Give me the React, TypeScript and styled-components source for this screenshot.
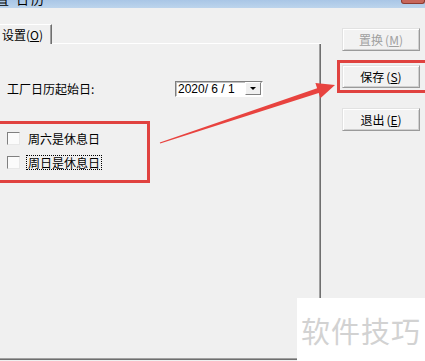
import styled, { createGlobalStyle } from 'styled-components';

const GlobalStyle = createGlobalStyle`
  html, body {
    margin: 0;
    padding: 0;
    background: #f0f0f0;
  }
`;

const Window = styled.div`
  position: relative;
  display: flex;
  flex-direction: column;
  width: 425px;
  height: 361px;
  overflow: hidden;
  background: #f0f0f0;
  font-family: 'Noto Sans CJK SC', 'DejaVu Sans', sans-serif;
  font-size: 12px;
  color: #000;
`;

const TitleBar = styled.div`
  position: relative;
  flex: 0 0 8px;
  display: flex;
  align-items: flex-end;
  justify-content: space-between;
  overflow: hidden;
  background: linear-gradient(#a9c6e6, #bcd4ec);
`;

const TitleText = styled.span`
  margin-left: -4px;
  margin-bottom: 3px;
  font-size: 13px;
  line-height: 13px;
  letter-spacing: 2px;
`;

const CloseButton = styled.div`
  align-self: flex-start;
  width: 22px;
  height: 4px;
  margin-top: -1px;
  background: #c7665a;
  border: 1px solid #8d3b31;
  border-top: none;
  border-radius: 0 0 3px 3px;
`;

const Body = styled.div`
  flex: 1;
  display: flex;
`;

const LeftArea = styled.div`
  display: flex;
  flex-direction: column;
  width: 331px;
  margin-left: -10px;
  padding-top: 16px;
`;

const TabStrip = styled.div`
  display: flex;
  height: 20px;
`;

const Tab = styled.div`
  display: flex;
  align-items: center;
  padding: 0 8px 0 12px;
  border-top: 1px solid #ffffff;
  border-right: 1px solid #6f6f6f;
  box-shadow: inset -1px 0 0 #a0a0a0;
  line-height: 1;
`;

const TabRest = styled.div`
  flex: 1;
  border-bottom: 1px solid #ffffff;
`;

const Panel = styled.div`
  flex: 1;
  display: flex;
  flex-direction: column;
  padding: 36px 0 0 17px;
  border-right: 1px solid #6f6f6f;
  border-bottom: 1px solid #6f6f6f;
  box-shadow: inset -1px -1px 0 #a0a0a0;
  margin-bottom: 1px;
`;

const FieldRow = styled.div`
  display: flex;
  align-items: center;
  height: 17px;
`;

const FieldLabel = styled.span`
  width: 168px;
  line-height: 1;
`;

const DateBox = styled.div`
  display: flex;
  align-items: center;
  justify-content: space-between;
  width: 83px;
  height: 14px;
  padding: 0 1px 0 2px;
  background: #ffffff;
  border: 1px solid;
  border-color: #7f7f7f #ffffff #ffffff #7f7f7f;
  box-shadow: inset 1px 1px 0 #c0c0c0;
  font-family: 'Liberation Sans', 'Noto Sans CJK SC', sans-serif;
  font-size: 12px;
  line-height: 1;
`;

const DropButton = styled.div`
  display: flex;
  align-items: center;
  justify-content: center;
  width: 14px;
  height: 11px;
  background: #f0f0f0;
  border: 1px solid;
  border-color: #ffffff #808080 #808080 #ffffff;
`;

const DownTriangle = styled.div`
  width: 0;
  height: 0;
  border-left: 3px solid transparent;
  border-right: 3px solid transparent;
  border-top: 3px solid #000;
`;

const CheckList = styled.div`
  display: flex;
  flex-direction: column;
  gap: 12px;
  margin-top: 35px;
`;

const CheckRow = styled.div`
  display: flex;
  align-items: center;
  gap: 7px;
  height: 12px;
`;

const CheckBox = styled.div`
  width: 11px;
  height: 11px;
  background: #fbfbfb;
  border: 1px solid;
  border-color: #808080 #e8e8e8 #e8e8e8 #808080;
`;

const CheckLabel = styled.span<{ $focused?: boolean }>`
  padding: 0 1px;
  line-height: 13px;
  outline: ${({ $focused }) => ($focused ? '1px dotted #000' : 'none')};
`;

const ButtonColumn = styled.div`
  display: flex;
  flex-direction: column;
  padding: 20px 0 0 21px;
`;

const WinButton = styled.div<{ $disabled?: boolean; $gap?: number }>`
  display: flex;
  align-items: center;
  justify-content: center;
  gap: 2px;
  width: 76px;
  height: 21px;
  margin-top: ${({ $gap }) => $gap ?? 0}px;
  background: #f2f2f2;
  border: 1px solid;
  border-color: #e2e2e2 #9a9a9a #9a9a9a #e2e2e2;
  box-shadow: inset 1px 1px 0 #ffffff, inset -1px -1px 0 #d0d0d0;
  color: ${({ $disabled }) => ($disabled ? '#a0a0a0' : '#000')};
  line-height: 1;
`;

const Highlight = styled.div<{ $left: number; $top: number; $width: number; $height: number }>`
  position: absolute;
  left: ${({ $left }) => $left}px;
  top: ${({ $top }) => $top}px;
  width: ${({ $width }) => $width}px;
  height: ${({ $height }) => $height}px;
  box-sizing: border-box;
  border: 3px solid #e0423f;
  pointer-events: none;
`;

const ArrowLayer = styled.svg`
  position: absolute;
  left: 0;
  top: 0;
  pointer-events: none;
`;

const Watermark = styled.div`
  position: absolute;
  left: 297px;
  top: 298px;
  width: 128px;
  height: 63px;
  display: flex;
  align-items: center;
  padding-left: 4px;
  box-sizing: border-box;
  background: #ffffff;
  color: #d2d2d2;
  font-size: 29px;
  letter-spacing: 1px;
`;

export default function App() {
  return (
    <>
      <GlobalStyle />
      <Window>
        <TitleBar>
          <TitleText>置 日历</TitleText>
          <CloseButton />
        </TitleBar>
        <Body>
          <LeftArea>
            <TabStrip>
              <Tab>
                设置(<u>O</u>)
              </Tab>
              <TabRest />
            </TabStrip>
            <Panel>
              <FieldRow>
                <FieldLabel>工厂日历起始日:</FieldLabel>
                <DateBox>
                  <span>2020/ 6 / 1</span>
                  <DropButton>
                    <DownTriangle />
                  </DropButton>
                </DateBox>
              </FieldRow>
              <CheckList>
                <CheckRow>
                  <CheckBox />
                  <CheckLabel>周六是休息日</CheckLabel>
                </CheckRow>
                <CheckRow>
                  <CheckBox />
                  <CheckLabel $focused>周日是休息日</CheckLabel>
                </CheckRow>
              </CheckList>
            </Panel>
          </LeftArea>
          <ButtonColumn>
            <WinButton $disabled>
              <span>置换</span>
              <span>
                (<u>M</u>)
              </span>
            </WinButton>
            <WinButton $gap={14}>
              <span>保存</span>
              <span>
                (<u>S</u>)
              </span>
            </WinButton>
            <WinButton $gap={20}>
              <span>退出</span>
              <span>
                (<u>E</u>)
              </span>
            </WinButton>
          </ButtonColumn>
        </Body>

        <Highlight $left={-3} $top={121} $width={153} $height={62} />
        <Highlight $left={337} $top={60} $width={92} $height={33} />
        <ArrowLayer width={425} height={361} viewBox="0 0 425 361">
          <polygon
            points="160.2,143.5 318.7,93.1 320.4,98.3 335,85 315.4,83.1 317.1,88.3 159.8,142.5"
            fill="#e8433f"
          />
        </ArrowLayer>
        <Watermark>软件技巧</Watermark>
      </Window>
    </>
  );
}
